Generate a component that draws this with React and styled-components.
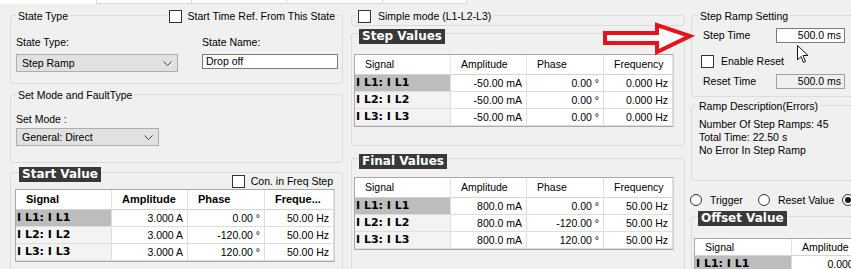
import React from "react";
import styled, { createGlobalStyle } from "styled-components";

const GlobalStyle = createGlobalStyle`
  * { box-sizing: border-box; }
  html, body {
    margin: 0;
    padding: 0;
    background: #f0f0f0;
  }
  body {
    font-family: "Liberation Sans", Arial, sans-serif;
    font-size: 10.5px;
    color: #000;
    overflow: hidden;
  }
`;

const Screen = styled.div`
  position: relative;
  width: 851px;
  height: 269px;
  overflow: hidden;
  background: #f0f0f0;
`;

const TabStrip = styled.div`
  display: flex;
  height: 4px;
`;

const Tab = styled.div`
  flex: none;
  width: ${(p) => p.$w}px;
  background: #fff;
  border-right: 1px solid #d9d9d9;
  border-bottom: ${(p) => (p.$active ? "none" : "1px solid #d9d9d9")};
`;

const Columns = styled.div`
  display: flex;
  align-items: flex-start;
  padding: 11px 0 0 10px;
`;

const Column = styled.div`
  display: flex;
  flex-direction: column;
  flex: none;
  width: ${(p) => p.$w}px;
  margin-left: ${(p) => p.$gap || 0}px;
`;

const Group = styled.div`
  display: flex;
  flex-direction: column;
  flex: none;
  height: ${(p) => p.$h}px;
  margin-top: ${(p) => p.$mt || 0}px;
  border: 1px solid #dcdcdc;
  border-radius: 3px;
`;

const Legend = styled.div`
  display: flex;
  align-items: ${(p) => p.$align || "center"};
  justify-content: space-between;
  margin-top: ${(p) => p.$mt}px;
  padding-left: ${(p) => p.$pl || 0}px;
  padding-right: ${(p) => p.$pr || 0}px;
`;

const LegendText = styled.span`
  background: #f0f0f0;
  padding: 0 2px;
  line-height: 14px;
  white-space: nowrap;
`;

const DarkTitle = styled.span`
  background: #393939;
  color: #fff;
  font-family: "DejaVu Sans", Verdana, sans-serif;
  font-weight: bold;
  font-size: 12px;
  height: 15px;
  line-height: 15px;
  padding: 0 3px;
  white-space: nowrap;
`;

const CheckLabel = styled.label`
  display: inline-flex;
  align-items: center;
  gap: ${(p) => p.$gap || 6}px;
  background: #f0f0f0;
  padding: 0 2px;
  line-height: 14px;
  margin-top: ${(p) => p.$mt || 0}px;
  white-space: nowrap;
`;

const CheckBox = styled.span`
  flex: none;
  width: 13px;
  height: 13px;
  border: 1px solid #333;
  background: #fff;
`;

const FieldGrid = styled.div`
  display: grid;
  grid-template-columns: ${(p) => p.$cols};
  column-gap: 24px;
  row-gap: ${(p) => p.$rowGap}px;
  padding: ${(p) => p.$pad};
  align-items: start;
`;

const Label = styled.span`
  line-height: 13px;
  white-space: nowrap;
`;

const Select = styled.div`
  display: flex;
  align-items: center;
  justify-content: space-between;
  width: ${(p) => p.$w}px;
  height: 18px;
  padding: 0 5px 0 5px;
  background: #e1e1e1;
  border: 1px solid #adadad;
  white-space: nowrap;
`;

const TextBox = styled.div`
  flex: none;
  width: ${(p) => p.$w}px;
  height: 15px;
  line-height: 13px;
  padding: 0 3px;
  text-align: ${(p) => p.$align || "left"};
  background: ${(p) => (p.$disabled ? "#f0f0f0" : "#fff")};
  border: 1px solid ${(p) => (p.$disabled ? "#a0a0a0" : "#7a7a7a")};
  white-space: nowrap;
`;

const FormRow = styled.div`
  display: flex;
  align-items: center;
  margin-top: ${(p) => p.$mt}px;
  padding-left: ${(p) => p.$pl}px;
`;

const RowLabel = styled.span`
  flex: none;
  width: ${(p) => p.$w}px;
  line-height: 13px;
`;

const Lines = styled.div`
  display: flex;
  flex-direction: column;
  padding: 5px 0 0 7px;
  line-height: 13px;
  white-space: nowrap;
`;

const RadioRow = styled.div`
  display: flex;
  align-items: center;
  gap: 15px;
  margin-top: 12px;
  margin-left: -1px;
  height: 13px;
  white-space: nowrap;
`;

const RadioOption = styled.label`
  display: inline-flex;
  align-items: center;
  gap: 8px;
  margin-left: ${(p) => p.$ml || 0}px;
`;

const Radio = styled.span`
  flex: none;
  display: flex;
  align-items: center;
  justify-content: center;
  width: 12px;
  height: 12px;
  border-radius: 50%;
  border: 1px solid #333;
  background: #fff;

  &::after {
    content: "";
    width: 6px;
    height: 6px;
    border-radius: 50%;
    background: ${(p) => (p.$checked ? "#1a1a1a" : "transparent")};
  }
`;

const Table = styled.div`
  display: grid;
  grid-template-columns: ${(p) => p.$cols};
  align-self: flex-start;
  margin: ${(p) => p.$mt}px 0 0 ${(p) => p.$ml}px;
  border: 1px solid #a9a9a9;
  border-right-color: #d0d0d0;
  background: #fff;
  white-space: nowrap;
`;

const HeadCell = styled.div`
  height: ${(p) => p.$h}px;
  line-height: ${(p) => p.$h - 1}px;
  padding-left: 10px;
  font-weight: ${(p) => (p.$bold ? 700 : 400)};
  font-size: ${(p) => (p.$bold ? "11px" : "10.5px")};
  border-right: 1px solid #e3e3e3;
  border-bottom: 1px solid #d4d4d4;
  overflow: hidden;
`;

const SignalCell = styled.div`
  height: 17px;
  line-height: 16px;
  padding-left: 1px;
  font-family: "DejaVu Sans", Verdana, sans-serif;
  font-weight: bold;
  font-size: 11px;
  background: ${(p) => (p.$selected ? "#bdbdbd" : "#f3f3f3")};
  border-right: 1px solid #dedede;
  border-bottom: 1px solid #dedede;
  overflow: hidden;
`;

const ValueCell = styled.div`
  height: 17px;
  line-height: 16px;
  padding-right: 4px;
  text-align: right;
  border-right: 1px solid #dedede;
  border-bottom: 1px solid #dedede;
  overflow: hidden;
`;

const Overlay = styled.svg`
  position: absolute;
  left: ${(p) => p.$x}px;
  top: ${(p) => p.$y}px;
  overflow: visible;
`;

const Chevron = () => (
  <svg width="9" height="5" viewBox="0 0 9 5">
    <polyline points="0.5,0.5 4.5,4.5 8.5,0.5" fill="none" stroke="#444" strokeWidth="1" />
  </svg>
);

const Check = ({ children, gap, mt }) => (
  <CheckLabel $gap={gap} $mt={mt}>
    <CheckBox />
    {children}
  </CheckLabel>
);

const signals = ["I L1: I L1", "I L2: I L2", "I L3: I L3"];

const DataTable = ({ cols, headers, rows, boldHead, headH = 20, mt, ml }) => (
  <Table $cols={cols} $mt={mt} $ml={ml}>
    {headers.map((h) => (
      <HeadCell key={h} $bold={boldHead} $h={headH}>
        {h}
      </HeadCell>
    ))}
    {rows.map((r, i) => (
      <React.Fragment key={i}>
        <SignalCell $selected={i === 0}>{signals[i]}</SignalCell>
        {r.map((v, j) => (
          <ValueCell key={j}>{v}</ValueCell>
        ))}
      </React.Fragment>
    ))}
  </Table>
);

const COLS = "96px 76px 77px 69px";

export default function App() {
  return (
    <Screen>
      <GlobalStyle />
      <TabStrip>
        <Tab $w={97} $active />
        <Tab $w={95} />
        <Tab $w={95} />
        <Tab $w={96} />
        <Tab $w={84} />
      </TabStrip>

      <Columns>
        <Column $w={333}>
          <Group $h={69}>
            <Legend $mt={-7} $pl={5} $pr={5}>
              <LegendText>State Type</LegendText>
              <Check>Start Time Ref. From This State</Check>
            </Legend>
            <FieldGrid $cols="162px 136px" $rowGap={5} $pad="13px 0 0 5px">
              <Label>State Type:</Label>
              <Label>State Name:</Label>
              <Select $w={162}>
                Step Ramp
                <Chevron />
              </Select>
              <TextBox $w={136}>Drop off</TextBox>
            </FieldGrid>
          </Group>

          <Group $h={69} $mt={10}>
            <Legend $mt={-7} $pl={5}>
              <LegendText>Set Mode and FaultType</LegendText>
            </Legend>
            <FieldGrid $cols="143px" $rowGap={2} $pad="11px 0 0 5px">
              <Label>Set Mode :</Label>
              <Select $w={143}>
                General: Direct
                <Chevron />
              </Select>
            </FieldGrid>
          </Group>

          <Group $h={120} $mt={9}>
            <Legend $mt={-6} $pl={8} $pr={7} $align="flex-start">
              <DarkTitle>Start Value</DarkTitle>
              <Check mt={7}>Con. in Freq Step</Check>
            </Legend>
            <DataTable
              cols={COLS}
              boldHead
              mt={1}
              ml={4}
              headers={["Signal", "Amplitude", "Phase", "Freque..."]}
              rows={[
                ["3.000 A", "0.00 °", "50.00 Hz"],
                ["3.000 A", "-120.00 °", "50.00 Hz"],
                ["3.000 A", "120.00 °", "50.00 Hz"],
              ]}
            />
          </Group>
        </Column>

        <Column $w={334} $gap={8}>
          <Group $h={11}>
            <Legend $mt={-7} $pl={4}>
              <Check gap={7}>Simple mode (L1-L2-L3)</Check>
            </Legend>
          </Group>

          <Group $h={113} $mt={7}>
            <Legend $mt={-5} $pl={7}>
              <DarkTitle>Step Values</DarkTitle>
            </Legend>
            <DataTable
              cols={COLS}
              mt={10}
              ml={2}
              headers={["Signal", "Amplitude", "Phase", "Frequency"]}
              rows={[
                ["-50.00 mA", "0.00 °", "0.000 Hz"],
                ["-50.00 mA", "0.00 °", "0.000 Hz"],
                ["-50.00 mA", "0.00 °", "0.000 Hz"],
              ]}
            />
          </Group>

          <Group $h={130} $mt={12}>
            <Legend $mt={-5} $pl={7}>
              <DarkTitle>Final Values</DarkTitle>
            </Legend>
            <DataTable
              cols={COLS}
              mt={8}
              ml={2}
              headers={["Signal", "Amplitude", "Phase", "Frequency"]}
              rows={[
                ["800.0 mA", "0.00 °", "50.00 Hz"],
                ["800.0 mA", "-120.00 °", "50.00 Hz"],
                ["800.0 mA", "120.00 °", "50.00 Hz"],
              ]}
            />
          </Group>
        </Column>

        <Column $w={170} $gap={6}>
          <Group $h={82}>
            <Legend $mt={-7} $pl={6}>
              <LegendText>Step Ramp Setting</LegendText>
            </Legend>
            <FormRow $mt={5} $pl={11}>
              <RowLabel $w={73}>Step Time</RowLabel>
              <TextBox $w={69} $align="right">500.0 ms</TextBox>
            </FormRow>
            <FormRow $mt={11} $pl={7}>
              <Check gap={7}>Enable Reset</Check>
            </FormRow>
            <FormRow $mt={6} $pl={11}>
              <RowLabel $w={73}>Reset Time</RowLabel>
              <TextBox $w={69} $align="right" $disabled>
                500.0 ms
              </TextBox>
            </FormRow>
          </Group>

          <Group $h={76} $mt={8}>
            <Legend $mt={-7} $pl={5}>
              <LegendText>Ramp Description(Errors)</LegendText>
            </Legend>
            <Lines>
              <span>Number Of Step Ramps: 45</span>
              <span>Total Time: 22.50 s</span>
              <span>No Error In Step Ramp</span>
            </Lines>
          </Group>

          <RadioRow>
            <RadioOption>
              <Radio />
              Trigger
            </RadioOption>
            <RadioOption>
              <Radio />
              Reset Value
            </RadioOption>
            <RadioOption $ml={-7}>
              <Radio $checked />
            </RadioOption>
          </RadioRow>

          <Group $h={80} $mt={10}>
            <Legend $mt={-6} $pl={6}>
              <DarkTitle>Offset Value</DarkTitle>
            </Legend>
            <DataTable
              cols="97px 76px"
              mt={12}
              ml={2}
              headH={17}
              headers={["Signal", "Amplitude"]}
              rows={[["0.000 A"]]}
            />
          </Group>
        </Column>
      </Columns>

      <Overlay $x={598} $y={18} width="100" height="42" viewBox="0 0 100 42">
        <polygon
          points="7,15 59,15 59,7 92,18 59,34 59,25 7,25"
          fill="#fafafa"
          stroke="#e3141b"
          strokeWidth="4"
          strokeLinejoin="miter"
        />
      </Overlay>

      <Overlay $x={797} $y={45} width="12" height="19" viewBox="0 0 12 19">
        <path
          d="M0.5,0.5 L0.5,15 L4,11.5 L6.5,17.5 L8.5,16.5 L6,10.5 L11,10.5 Z"
          fill="#fff"
          stroke="#111"
          strokeWidth="1"
          strokeLinejoin="round"
        />
      </Overlay>
    </Screen>
  );
}
